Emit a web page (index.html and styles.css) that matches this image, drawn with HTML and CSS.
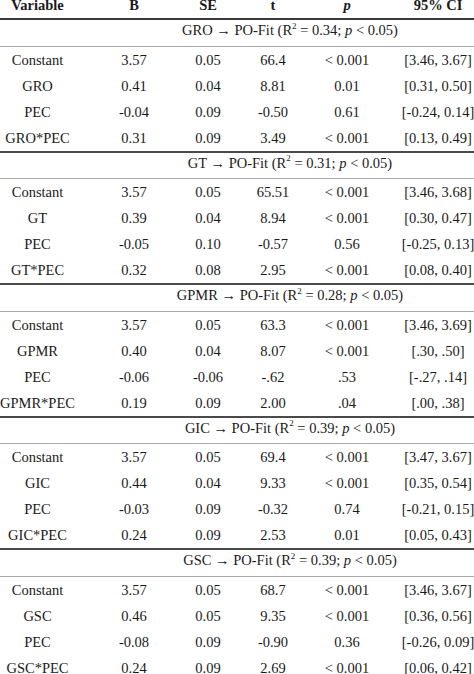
FILE: index.html
```html
<!DOCTYPE html>
<html>
<head>
<meta charset="utf-8">
<link rel="stylesheet" href="styles.css">
</head>
<body>
<div class="table">
  <div class="row head">
    <div class="c"><span>Variable</span></div><div class="c"><span>B</span></div><div class="c"><span>SE</span></div><div class="c"><span>t</span></div><div class="c"><span><i>p</i></span></div><div class="c"><span>95% CI</span></div>
  </div>

  <div class="section">
    <div class="row title"><div class="c"></div><div class="c span"><span>GRO → PO-Fit (R<sup>2</sup> = 0.34; <i>p</i> &lt; 0.05)</span></div></div>
    <div class="row"><div class="c"><span>Constant</span></div><div class="c"><span>3.57</span></div><div class="c"><span>0.05</span></div><div class="c"><span>66.4</span></div><div class="c"><span>&lt; 0.001</span></div><div class="c"><span>[3.46, 3.67]</span></div></div>
    <div class="row"><div class="c"><span>GRO</span></div><div class="c"><span>0.41</span></div><div class="c"><span>0.04</span></div><div class="c"><span>8.81</span></div><div class="c"><span>0.01</span></div><div class="c"><span>[0.31, 0.50]</span></div></div>
    <div class="row"><div class="c"><span>PEC</span></div><div class="c"><span>-0.04</span></div><div class="c"><span>0.09</span></div><div class="c"><span>-0.50</span></div><div class="c"><span>0.61</span></div><div class="c"><span>[-0.24, 0.14]</span></div></div>
    <div class="row"><div class="c"><span>GRO*PEC</span></div><div class="c"><span>0.31</span></div><div class="c"><span>0.09</span></div><div class="c"><span>3.49</span></div><div class="c"><span>&lt; 0.001</span></div><div class="c"><span>[0.13, 0.49]</span></div></div>
  </div>

  <div class="section">
    <div class="row title"><div class="c"></div><div class="c span"><span>GT → PO-Fit (R<sup>2</sup> = 0.31; <i>p</i> &lt; 0.05)</span></div></div>
    <div class="row"><div class="c"><span>Constant</span></div><div class="c"><span>3.57</span></div><div class="c"><span>0.05</span></div><div class="c"><span>65.51</span></div><div class="c"><span>&lt; 0.001</span></div><div class="c"><span>[3.46, 3.68]</span></div></div>
    <div class="row"><div class="c"><span>GT</span></div><div class="c"><span>0.39</span></div><div class="c"><span>0.04</span></div><div class="c"><span>8.94</span></div><div class="c"><span>&lt; 0.001</span></div><div class="c"><span>[0.30, 0.47]</span></div></div>
    <div class="row"><div class="c"><span>PEC</span></div><div class="c"><span>-0.05</span></div><div class="c"><span>0.10</span></div><div class="c"><span>-0.57</span></div><div class="c"><span>0.56</span></div><div class="c"><span>[-0.25, 0.13]</span></div></div>
    <div class="row"><div class="c"><span>GT*PEC</span></div><div class="c"><span>0.32</span></div><div class="c"><span>0.08</span></div><div class="c"><span>2.95</span></div><div class="c"><span>&lt; 0.001</span></div><div class="c"><span>[0.08, 0.40]</span></div></div>
  </div>

  <div class="section">
    <div class="row title"><div class="c"></div><div class="c span"><span>GPMR → PO-Fit (R<sup>2</sup> = 0.28; <i>p</i> &lt; 0.05)</span></div></div>
    <div class="row"><div class="c"><span>Constant</span></div><div class="c"><span>3.57</span></div><div class="c"><span>0.05</span></div><div class="c"><span>63.3</span></div><div class="c"><span>&lt; 0.001</span></div><div class="c"><span>[3.46, 3.69]</span></div></div>
    <div class="row"><div class="c"><span>GPMR</span></div><div class="c"><span>0.40</span></div><div class="c"><span>0.04</span></div><div class="c"><span>8.07</span></div><div class="c"><span>&lt; 0.001</span></div><div class="c"><span>[.30, .50]</span></div></div>
    <div class="row"><div class="c"><span>PEC</span></div><div class="c"><span>-0.06</span></div><div class="c"><span>-0.06</span></div><div class="c"><span>-.62</span></div><div class="c"><span>.53</span></div><div class="c"><span>[-.27, .14]</span></div></div>
    <div class="row"><div class="c"><span>GPMR*PEC</span></div><div class="c"><span>0.19</span></div><div class="c"><span>0.09</span></div><div class="c"><span>2.00</span></div><div class="c"><span>.04</span></div><div class="c"><span>[.00, .38]</span></div></div>
  </div>

  <div class="section">
    <div class="row title"><div class="c"></div><div class="c span"><span>GIC → PO-Fit (R<sup>2</sup> = 0.39; <i>p</i> &lt; 0.05)</span></div></div>
    <div class="row"><div class="c"><span>Constant</span></div><div class="c"><span>3.57</span></div><div class="c"><span>0.05</span></div><div class="c"><span>69.4</span></div><div class="c"><span>&lt; 0.001</span></div><div class="c"><span>[3.47, 3.67]</span></div></div>
    <div class="row"><div class="c"><span>GIC</span></div><div class="c"><span>0.44</span></div><div class="c"><span>0.04</span></div><div class="c"><span>9.33</span></div><div class="c"><span>&lt; 0.001</span></div><div class="c"><span>[0.35, 0.54]</span></div></div>
    <div class="row"><div class="c"><span>PEC</span></div><div class="c"><span>-0.03</span></div><div class="c"><span>0.09</span></div><div class="c"><span>-0.32</span></div><div class="c"><span>0.74</span></div><div class="c"><span>[-0.21, 0.15]</span></div></div>
    <div class="row"><div class="c"><span>GIC*PEC</span></div><div class="c"><span>0.24</span></div><div class="c"><span>0.09</span></div><div class="c"><span>2.53</span></div><div class="c"><span>0.01</span></div><div class="c"><span>[0.05, 0.43]</span></div></div>
  </div>

  <div class="section last">
    <div class="row title"><div class="c"></div><div class="c span"><span>GSC → PO-Fit (R<sup>2</sup> = 0.39; <i>p</i> &lt; 0.05)</span></div></div>
    <div class="row"><div class="c"><span>Constant</span></div><div class="c"><span>3.57</span></div><div class="c"><span>0.05</span></div><div class="c"><span>68.7</span></div><div class="c"><span>&lt; 0.001</span></div><div class="c"><span>[3.46, 3.67]</span></div></div>
    <div class="row"><div class="c"><span>GSC</span></div><div class="c"><span>0.46</span></div><div class="c"><span>0.05</span></div><div class="c"><span>9.35</span></div><div class="c"><span>&lt; 0.001</span></div><div class="c"><span>[0.36, 0.56]</span></div></div>
    <div class="row"><div class="c"><span>PEC</span></div><div class="c"><span>-0.08</span></div><div class="c"><span>0.09</span></div><div class="c"><span>-0.90</span></div><div class="c"><span>0.36</span></div><div class="c"><span>[-0.26, 0.09]</span></div></div>
    <div class="row"><div class="c"><span>GSC*PEC</span></div><div class="c"><span>0.24</span></div><div class="c"><span>0.09</span></div><div class="c"><span>2.69</span></div><div class="c"><span>&lt; 0.001</span></div><div class="c"><span>[0.06, 0.42]</span></div></div>
  </div>
</div>
</body>
</html>
```

FILE: styles.css
```css
html, body {
  margin: 0;
  padding: 0;
  background: #ffffff;
  overflow: hidden;
}
body {
  font-family: "Liberation Serif", "Times New Roman", serif;
  font-size: 14.5px;
  color: #1a1a1a;
}
.table {
  width: 505px;
  margin-top: -8px;
}
.row {
  display: grid;
  grid-template-columns: 75px 118px 30px 100px 48px 134px;
  height: 26px;
  line-height: 26px;
}
.c {
  display: flex;
  justify-content: center;
  white-space: nowrap;
}
.head {
  font-weight: bold;
  border-bottom: 2px solid #3a3a3a;
}
.section {
  border-bottom: 2px solid #4a4a4a;
}
.section.last {
  border-bottom: none;
}
.title {
  height: 25.5px;
  line-height: 25.5px;
  border-bottom: 1px solid #a8a8a8;
}
.title .c span {
  position: relative;
  top: -2px;
}
.span {
  grid-column: 2 / 7;
}
sup {
  font-size: 0.62em;
  line-height: 0;
  vertical-align: baseline;
  position: relative;
  top: -0.7em;
}
```
